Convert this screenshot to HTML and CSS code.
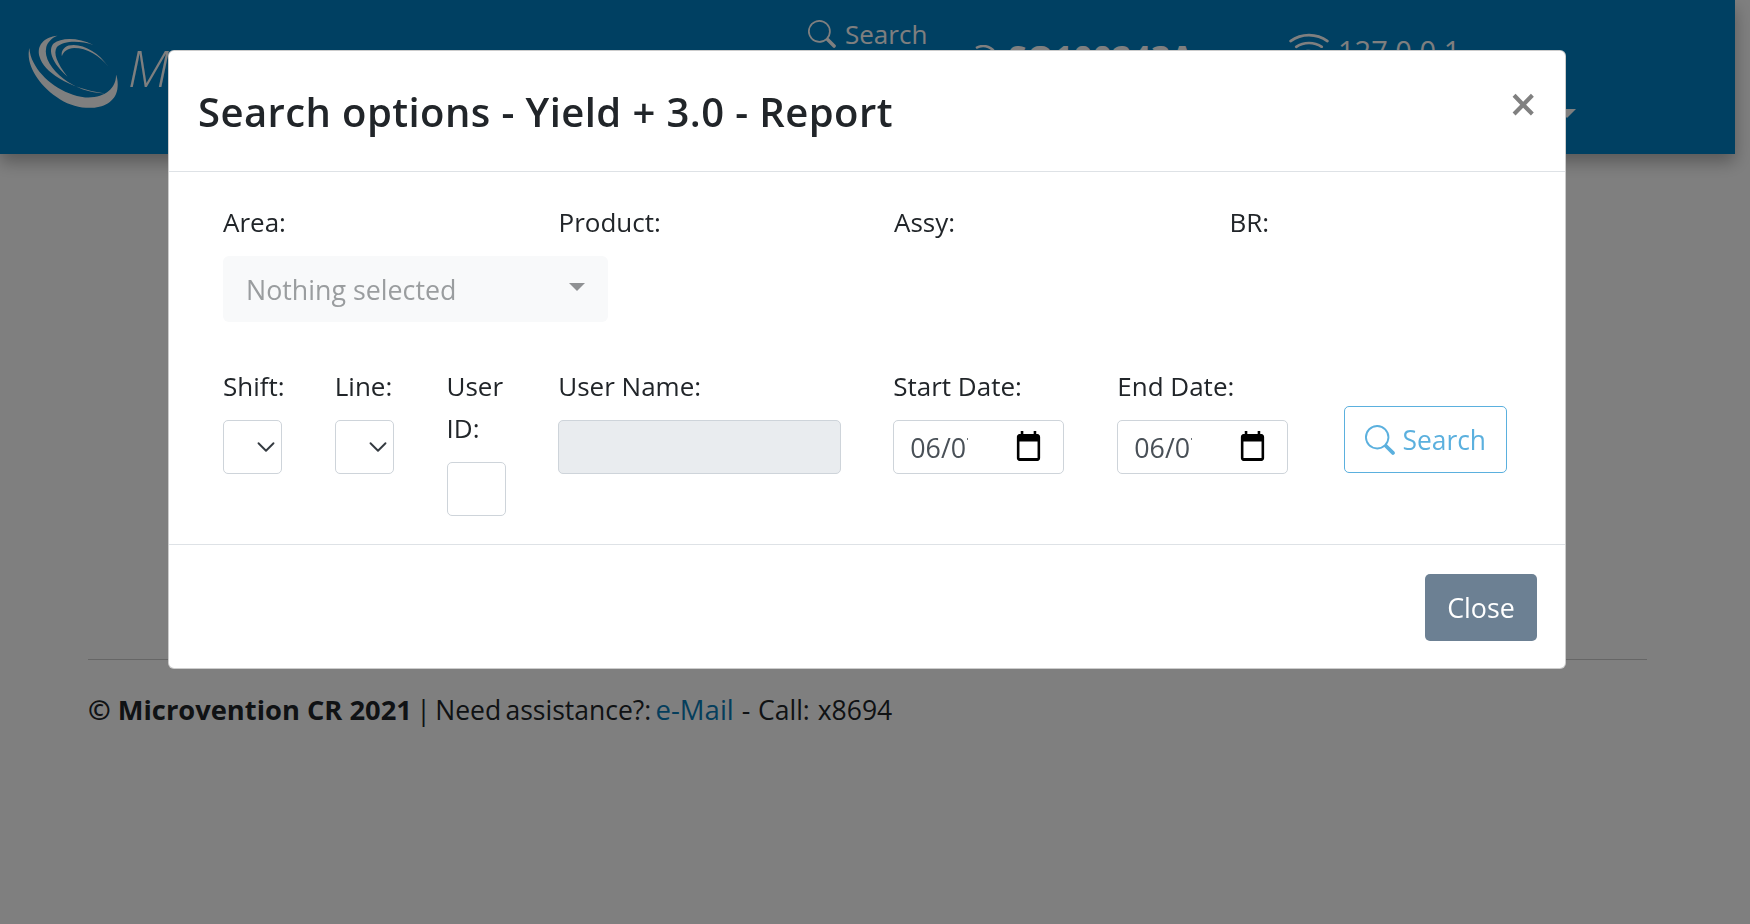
FILE: index.html
```html
<!DOCTYPE html>
<html lang="en">
<head>
<meta charset="utf-8">
<title>Yield + 3.0 - Report</title>
<link rel="stylesheet" href="styles.css">
</head>
<body>
<div class="page">
  <header class="topbar">
    <svg class="logo" viewBox="50 40 280 235" width="93" height="78">
      <g fill="#fff">
        <path d="M57 85C45 135 85 200 150 240C215 280 310 275 322 210C325 190 322 175 318 165C320 205 285 238 225 234C160 228 95 180 70 130C62 115 58 100 57 85Z"/>
        <path d="M142 48C100 52 78 78 88 112C100 155 170 205 285 222C240 222 195 205 160 178C125 150 100 115 108 82C113 66 125 54 142 48Z"/>
        <path d="M250 76C205 54 155 52 130 72C112 92 125 130 172 172C140 130 128 100 140 82C160 62 210 62 250 76Z"/>
        <path d="M295 142C265 95 210 68 175 78C160 84 152 96 155 110C160 95 172 86 192 85C230 85 270 108 295 142Z"/>
      </g>
    </svg>
    <span class="brand">Microvention</span>
    <div class="top-search">
      <svg viewBox="0 0 16 16" width="28" height="28"><path fill="#fff" d="M11.742 10.344a6.500 6.500 0 1 0-1.397 1.398l3.850 3.850a1 1 0 0 0 1.415-1.414l-3.868-3.834zM12 6.500a5.500 5.500 0 1 1-11 0 5.500 5.500 0 0 1 11 0z"/></svg>
      <span>Search</span>
    </div>
    <div class="top-user">
      <svg viewBox="0 0 16 16" width="32" height="32"><path fill="none" stroke="#fff" stroke-width="1.200" d="M4 1.500a7 7 0 0 1 8.500 11"/></svg>
      <b>SO100243A</b>
    </div>
    <div class="top-ip">
      <svg viewBox="0 0 16 16" width="42" height="42"><path fill="#fff" d="M15.385 6.115a.485.485 0 0 0-.048-.736A12.440 12.440 0 0 0 8 3 12.440 12.440 0 0 0 .663 5.379a.485.485 0 0 0-.048.736.520.520 0 0 0 .668.050A11.450 11.450 0 0 1 8 4c2.507 0 4.827.802 6.717 2.164.204.148.489.130.668-.049z"/><path fill="#fff" d="M13.229 8.271c.216-.216.194-.578-.063-.745A9.460 9.460 0 0 0 8 6c-1.905 0-3.680.560-5.166 1.526a.480.480 0 0 0-.063.745.530.530 0 0 0 .652.065A8.460 8.460 0 0 1 8 7a8.460 8.460 0 0 1 4.577 1.336c.205.132.480.108.652-.065z"/><path fill="#fff" d="M11.060 10.440c.196-.196.198-.520-.040-.660A6.980 6.980 0 0 0 8 9c-1.060 0-2.062.236-3.020.780-.238.140-.236.464-.040.660.172.172.442.188.660.085A5.980 5.980 0 0 1 8 10c.868 0 1.690.184 2.400.525.218.103.488.087.660-.085z"/></svg>
      <span>127.0.0.1</span>
    </div>
    <span class="top-caret"></span>
  </header>
  <main class="content">
    <hr class="rule">
    <footer class="foot"><b>© Microvention CR 2021</b><span class="assist"> | Need assistance?: </span><a href="#">e-Mail</a><span class="tail"> - Call: x8694</span></footer>
  </main>
</div>
<div class="backdrop">
  <section class="modal">
    <div class="modal-head">
      <h5>Search options - Yield + 3.0 - Report</h5>
      <span class="close">×</span>
    </div>
    <div class="modal-body">
      <div class="row row-top">
        <div class="col w-area">
          <label>Area:</label>
          <div class="picker"><span>Nothing selected</span><i class="caret"></i></div>
        </div>
        <div class="col w-q"><label>Product:</label></div>
        <div class="col w-q"><label>Assy:</label></div>
        <div class="col"><label>BR:</label></div>
      </div>
      <div class="row">
        <div class="col w-s">
          <label>Shift:</label>
          <div class="ctl sel"><svg viewBox="0 0 16 16" width="20" height="20"><path fill="none" stroke="#343a40" stroke-linecap="round" stroke-linejoin="round" stroke-width="1.500" d="M2 5l6 6 6-6"/></svg></div>
        </div>
        <div class="col w-s">
          <label>Line:</label>
          <div class="ctl sel"><svg viewBox="0 0 16 16" width="20" height="20"><path fill="none" stroke="#343a40" stroke-linecap="round" stroke-linejoin="round" stroke-width="1.500" d="M2 5l6 6 6-6"/></svg></div>
        </div>
        <div class="col w-s">
          <label>User ID:</label>
          <div class="ctl"></div>
        </div>
        <div class="col w-name">
          <label>User Name:</label>
          <div class="ctl off"></div>
        </div>
        <div class="col w-date">
          <label>Start Date:</label>
          <div class="ctl date"><span class="clip">06/07</span><svg viewBox="0 0 24 24" width="31" height="36" preserveAspectRatio="none"><path d="M19 4h-1V2h-2v2H8V2H6v2H5C3.900 4 3 4.900 3 6v14c0 1.100.9 2 2 2h14c1.100 0 2-.9 2-2V6c0-1.100-.9-2-2-2zm0 16H5V9h14v11z"/></svg></div>
        </div>
        <div class="col w-date">
          <label>End Date:</label>
          <div class="ctl date"><span class="clip">06/07</span><svg viewBox="0 0 24 24" width="31" height="36" preserveAspectRatio="none"><path d="M19 4h-1V2h-2v2H8V2H6v2H5C3.900 4 3 4.900 3 6v14c0 1.100.9 2 2 2h14c1.100 0 2-.9 2-2V6c0-1.100-.9-2-2-2zm0 16H5V9h14v11z"/></svg></div>
        </div>
        <button class="btn-search" type="button">
          <svg viewBox="0 0 16 16" width="30" height="30"><path fill="#5bb0de" d="M11.742 10.344a6.500 6.500 0 1 0-1.397 1.398l3.850 3.850a1 1 0 0 0 1.415-1.414l-3.868-3.834zM12 6.500a5.500 5.500 0 1 1-11 0 5.500 5.500 0 0 1 11 0z"/></svg>
          <span>Search</span>
        </button>
      </div>
    </div>
    <div class="modal-foot"><button class="btn-close" type="button">Close</button></div>
  </section>
</div>
</body>
</html>
```
FILE: styles.css
```css
* { box-sizing: border-box; }
html, body { margin: 0; height: 100%; overflow: hidden; }
body {
  font-family: "Open Sans", "Noto Sans", sans-serif;
  font-size: 26.800px;
  line-height: 42px;
  color: #212529;
  background: #fff;
}
.page { height: 924px; width: 1735px; }
.topbar {
  height: 154px;
  background: #0080c4;
  box-shadow: 0 8px 16px rgba(0,0,0,.3);
  display: flex;
  align-items: flex-start;
  color: #fff;
  position: relative;
}
.logo { margin: 33px 0 0 27px; flex: none; }
.brand { margin: 38px 0 0 8px; font-size: 50px; line-height: 60px; font-style: italic; font-weight: 300; flex: none; width: 680px; white-space: nowrap; overflow: hidden; }
.top-search { display: flex; align-items: center; gap: 9px; margin-top: 13px; width: 160px; flex: none; font-size: 26px; }
.top-user { display: flex; align-items: flex-start; gap: 8px; margin-top: 36px; width: 320px; flex: none; font-size: 34px; }
.top-user svg { margin-top: 9px; }
.top-ip { display: flex; align-items: flex-start; gap: 8px; margin-top: 26px; flex: none; font-size: 29px; }
.top-ip span { padding-top: 4px; }
.top-caret { position: absolute; left: 1558px; top: 109px; border: 9px solid transparent; border-top-color: #fff; border-bottom-width: 0; }
.content { padding: 505px 88px 0; }
.rule { margin: 0; border: 0; border-top: 1px solid #ccc; }
.foot { margin-top: 29px; font-size: 26.500px; }
.foot b { font-size: 27.300px; }
.foot a { font-size: 27.500px; color: #0a7cb8; text-decoration: none; }
.assist { word-spacing: -2.500px; }
.tail { word-spacing: 1px; }

.backdrop {
  position: fixed;
  inset: 0;
  background: rgba(0,0,0,.5);
  padding: 50px 184px 0 168px;
}
.modal {
  background: #fff;
  border: 1px solid rgba(0,0,0,.2);
  border-radius: 6px;
  height: 619px;
  display: flex;
  flex-direction: column;
}
.modal-head {
  height: 121px;
  flex: none;
  border-bottom: 1px solid #dee2e6;
  display: flex;
  align-items: flex-start;
  justify-content: space-between;
  padding: 36px 29px 0;
}
.modal-head h5 { margin: 0; font-size: 40px; line-height: 50px; font-weight: 600; letter-spacing: .42px; }
.close { font-size: 48px; line-height: 48px; font-weight: 600; color: #808080; margin: -7px -1px 0 0; }
.modal-body { flex: 1; padding: 29px 0 0 54px; }
.row { display: flex; align-items: flex-start; }
.row-top { height: 164px; }
.col { flex: none; }
label { display: block; font-size: 26px; }
.w-area { width: 335.500px; }
.w-q { width: 335.500px; }
.w-s { width: 111.750px; padding-right: 52px; }
.w-s label { width: 70px; }
.w-name { width: 335px; padding-right: 52px; }
.w-date { width: 224px; padding-right: 53px; }
.picker {
  width: 385px;
  height: 66px;
  margin-top: 13px;
  background: #f8f9fa;
  border-radius: 6px;
  color: #9a9d9f;
  display: flex;
  align-items: center;
  justify-content: space-between;
  padding: 1px 23px 0;
  line-height: 65px;
}
.caret { border: 8px solid transparent; border-top: 8px solid #8f9193; border-bottom: 0; margin-top: -5px; }
.ctl {
  height: 54px;
  margin-top: 13px;
  border: 1px solid #ced4da;
  border-radius: 5px;
  background: #fff;
  width: 59px;
}
.sel { display: flex; align-items: center; justify-content: flex-end; padding-right: 5px; }
.off { width: 283px; background: #e9ecef; }
.date { width: 171px; display: flex; align-items: center; justify-content: space-between; padding: 0 19px 0 16px; color: #495057; line-height: 52px; }
.date svg { flex: none; margin-top: -3px; }
.clip { width: 58px; overflow: hidden; white-space: nowrap; padding-top: 1px; }
.btn-search {
  font: inherit;
  font-size: 26.400px;
  width: 163px;
  height: 67px;
  margin: 41px 0 0 3px;
  color: #5bb0de;
  background: #fff;
  border: 1px solid #5bb0de;
  border-radius: 5px;
  display: flex;
  align-items: center;
  justify-content: center;
  gap: 7px;
  padding: 0;
}
.modal-foot {
  height: 124px;
  flex: none;
  border-top: 1px solid #dee2e6;
  display: flex;
  justify-content: flex-end;
  padding: 29px 28px 0 0;
}
.btn-close {
  font: inherit;
  width: 112px;
  height: 67px;
  color: #fff;
  background: #6c8093;
  border: 0;
  border-radius: 5px;
  padding: 0;
}
```
